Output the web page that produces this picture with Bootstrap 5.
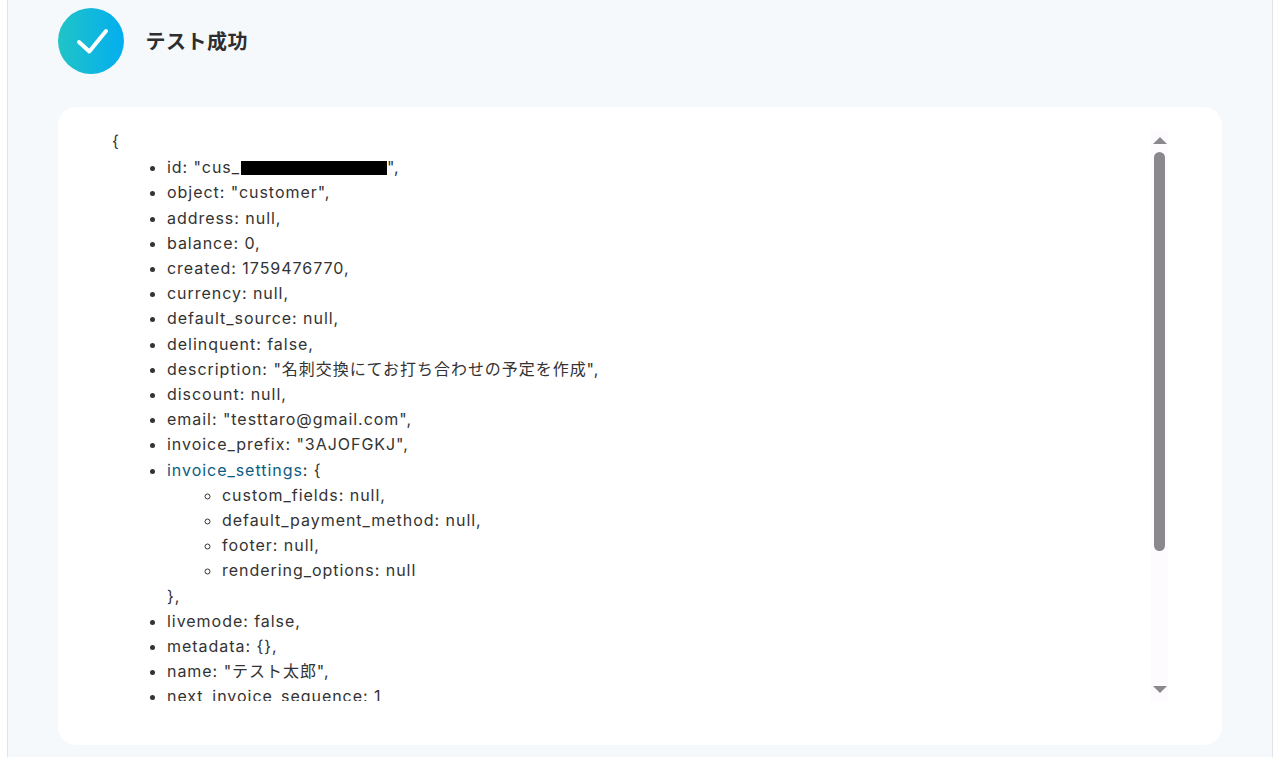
<!DOCTYPE html>
<html lang="ja">
<head>
<meta charset="utf-8">
<title>テスト成功</title>
<link href="https://cdn.jsdelivr.net/npm/bootstrap@5.3.0/dist/css/bootstrap.min.css" rel="stylesheet">
<style>
html,body{height:760px;overflow:hidden;background:#fff;}
body{font-family:Inter,"Noto Sans CJK JP",sans-serif;color:#333;}
.shell{margin:0 4px 0 7px;height:757px;background:#f5f9fc;border-left:1px solid #e2e4e8;border-right:1px solid #e2e4e8;padding:8px 50px 12px 50px;}
.okicon{width:66px;height:66px;background:linear-gradient(90deg,#20c4c6,#03aef0);}
.headline{font-size:20px;font-weight:600;letter-spacing:.5px;margin-left:21.5px;margin-top:1px;color:#2e2e2e;}
.sheet{margin-top:33px;height:638px;background:#fff;border-radius:18px;padding:22px 54px 0 54px;}
.scrollarea{height:572px;overflow:hidden;font-size:16px;line-height:25.2px;letter-spacing:.96px;}
.scrollarea ul{margin:0;padding-left:55px;}
.brace{height:26.15px;}
.redact{display:inline-block;width:146px;height:14px;margin-left:1px;background:#000;vertical-align:-2px;}
.linkkey{color:#0b5d80;}
.trackbar{width:17px;height:572px;margin-top:1px;background:#fdfbfe;}
.thumbbar{width:11px;height:399px;background:#8b888d;border-radius:6px;margin:0 auto;}
.arrowup,.arrowdown{width:0;height:0;border-left:7px solid transparent;border-right:7px solid transparent;margin:0 auto;}
.arrowup{border-bottom:7px solid #8b888d;margin-top:7px;margin-bottom:8px;}
.arrowdown{border-top:7px solid #8b888d;margin-top:135px;}
</style>
</head>
<body>
<div class="shell">
  <div class="d-flex align-items-center">
    <div class="okicon rounded-circle d-flex align-items-center justify-content-center">
      <svg width="36" height="30" viewBox="0 0 36 30" fill="none"><path d="M6 16 L16.3 25.5 L33 5" stroke="#fff" stroke-width="4" stroke-linecap="round" stroke-linejoin="round"/></svg>
    </div>
    <div class="headline">テスト成功</div>
  </div>
  <div class="sheet d-flex justify-content-between">
    <div class="scrollarea flex-grow-1">
      <div class="brace">{</div>
      <ul>
        <li>id: "cus_<span class="redact"></span>",</li>
        <li>object: "customer",</li>
        <li>address: null,</li>
        <li>balance: 0,</li>
        <li>created: 1759476770,</li>
        <li>currency: null,</li>
        <li>default_source: null,</li>
        <li>delinquent: false,</li>
        <li>description: "名刺交換にてお打ち合わせの予定を作成",</li>
        <li>discount: null,</li>
        <li>email: "testtaro@gmail.com",</li>
        <li>invoice_prefix: "3AJOFGKJ",</li>
        <li><span class="linkkey">invoice_settings</span>: {
          <ul>
            <li>custom_fields: null,</li>
            <li>default_payment_method: null,</li>
            <li>footer: null,</li>
            <li>rendering_options: null</li>
          </ul>
          },
        </li>
        <li>livemode: false,</li>
        <li>metadata: {},</li>
        <li>name: "テスト太郎",</li>
        <li>next_invoice_sequence: 1</li>
      </ul>
    </div>
    <div class="trackbar flex-shrink-0">
      <div class="arrowup"></div>
      <div class="thumbbar"></div>
      <div class="arrowdown"></div>
    </div>
  </div>
</div>
<script src="https://cdn.jsdelivr.net/npm/bootstrap@5.3.0/dist/js/bootstrap.bundle.min.js"></script>
</body>
</html>
